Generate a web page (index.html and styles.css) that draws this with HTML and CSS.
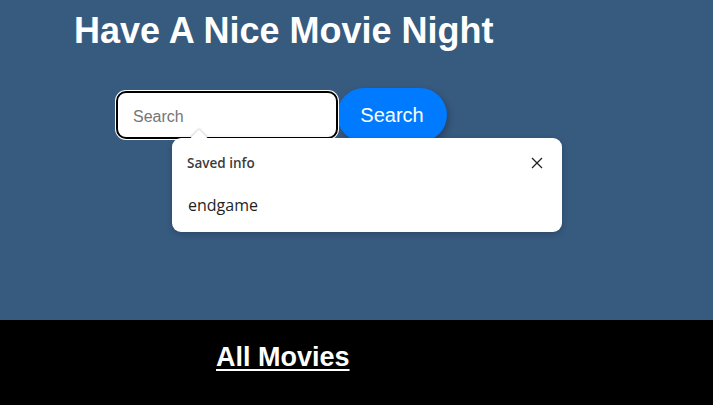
FILE: index.html
```html
<!DOCTYPE html>
<html>
<head>
<meta charset="utf-8">
<link rel="stylesheet" href="styles.css">
</head>
<body>
<main class="hero">
  <h1 class="title">Have A Nice Movie Night</h1>
  <form class="search">
    <div class="field">
      <input class="input" type="text" placeholder="Search">
      <div class="autofill">
        <div class="autofill-head">
          <span class="autofill-title">Saved info</span>
          <svg class="close" width="12" height="12" viewBox="0 0 12 12"><path d="M1 1L11 11M11 1L1 11" stroke="#222" stroke-width="1.3" fill="none"/></svg>
        </div>
        <div class="autofill-item">endgame</div>
      </div>
    </div>
    <button class="btn" type="button">Search</button>
  </form>
</main>
<footer class="footer">
  <a class="link" href="#">All Movies</a>
</footer>
</body>
</html>
```
FILE: styles.css
```css
* { box-sizing: border-box; }
html, body { margin: 0; padding: 0; }
body {
  background: #375a7f;
  font-family: "Liberation Sans", Arial, sans-serif;
  width: 713px;
  height: 405px;
  overflow: hidden;
}
.hero {
  height: 320px;
  padding-top: 1px;
}
.title {
  margin: 10px 0 0 74px;
  font-size: 36px;
  font-weight: bold;
  color: #fff;
  line-height: 40px;
}
.search {
  display: flex;
  align-items: center;
  margin: 37px 0 0 116px;
}
.field {
  position: relative;
}
.input {
  display: block;
  width: 222px;
  height: 48px;
  border: 2px solid #000;
  border-radius: 10px;
  box-shadow: 0 0 0 1px #fff;
  background: #fff;
  padding: 3px 14px 0 15px;
  font-family: "Liberation Sans", Arial, sans-serif;
  font-size: 16px;
  color: #000;
  outline: none;
}
.input::placeholder { color: #757575; }
.btn {
  width: 110px;
  height: 54px;
  margin-left: -1px;
  border: none;
  border-radius: 27px;
  background: #007bff;
  color: #fff;
  font-family: "Liberation Sans", Arial, sans-serif;
  font-size: 20px;
  box-shadow: 2px 3px 6px rgba(0,0,0,0.25);
}
.autofill {
  position: absolute;
  left: 56px;
  top: 47px;
  width: 390px;
  height: 94px;
  background: #fff;
  border-radius: 9px;
  box-shadow: 0 2px 6px rgba(0,0,0,0.2);
  z-index: 2;
  font-family: "Open Sans", "Noto Sans", sans-serif;
}
.autofill::before {
  content: "";
  position: absolute;
  left: 21px;
  top: -6px;
  width: 12px;
  height: 12px;
  background: #fff;
  transform: rotate(45deg);
  box-shadow: -1px -1px 2px rgba(0,0,0,0.15);
}
.autofill-head {
  position: relative;
  display: flex;
  justify-content: space-between;
  align-items: center;
  padding: 16px 19px 0 15px;
  height: 34px;
}
.autofill-title {
  font-size: 13.5px;
  font-weight: 600;
  color: #3c3c3c;
}
.autofill-item {
  padding: 22px 0 0 16px;
  font-size: 16px;
  color: #1f1f1f;
}
.footer {
  height: 85px;
  background: #000;
  padding-top: 22px;
  padding-left: 216px;
}
.link {
  color: #fff;
  font-size: 27px;
  font-weight: bold;
  text-decoration: underline;
  text-decoration-thickness: 2px;
  text-underline-offset: 3px;
}
```
